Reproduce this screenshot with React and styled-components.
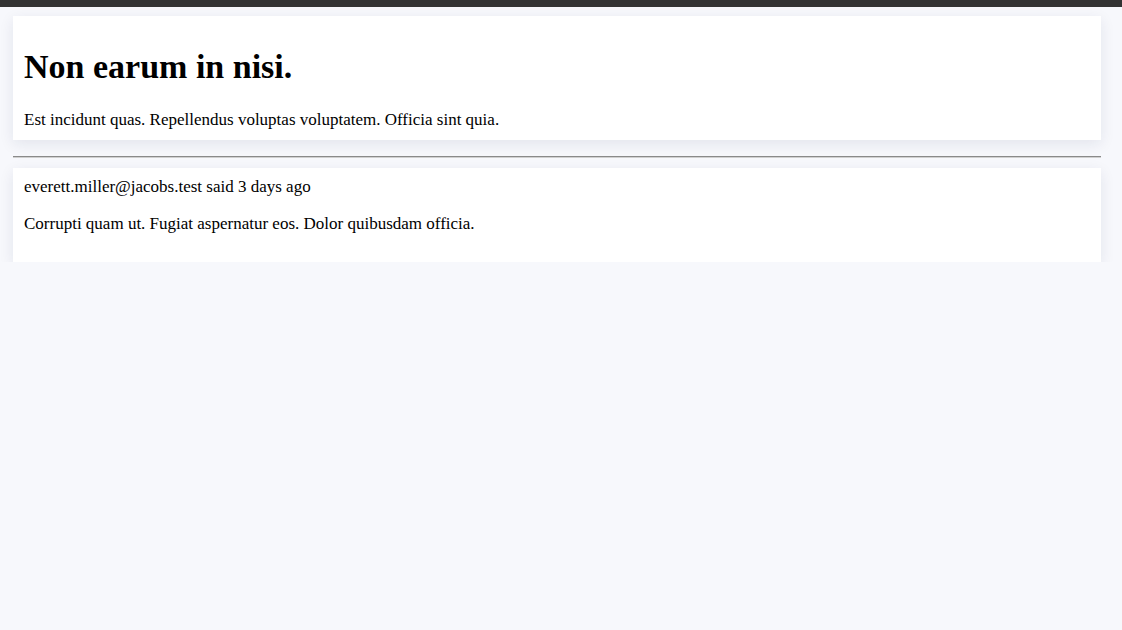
import React from "react";
import styled, { createGlobalStyle } from "styled-components";

const Global = createGlobalStyle`
  html, body { margin: 0; padding: 0; background: #f7f8fc; }
  body { font-family: "Liberation Serif", "Times New Roman", serif; color: #000; font-size: 17px; }
`;

const TopBar = styled.div`
  height: 7px;
  background: #333333;
`;

const Main = styled.main`
  padding: 9px 21px 0 13px;
`;

const Card = styled.section`
  background: #ffffff;
  padding: ${(p) => p.$top || 10}px 10px ${(p) => p.$bottom || 10}px 11px;
  box-shadow: 0 4px 14px rgba(20, 30, 80, 0.09);
`;

const Title = styled.h1`
  font-size: 34px;
  font-weight: bold;
  margin: 21px 0 24px;
  line-height: 1.15;
`;

const Text = styled.p`
  margin: ${(p) => p.$margin || "0"};
  line-height: 1.15;
`;

const Divider = styled.hr`
  margin: 16px 0 10px;
  border: none;
  border-top: 1px solid #8a8a8a;
  border-bottom: 1px solid #d0d0d0;
`;

export default function App() {
  return (
    <>
      <Global />
      <TopBar />
      <Main>
        <Card>
          <Title>Non earum in nisi.</Title>
          <Text>Est incidunt quas. Repellendus voluptas voluptatem. Officia sint quia.</Text>
        </Card>
        <Divider />
        <Card $top={9} $bottom={12}>
          <Text $margin="0 0 18px">everett.miller@jacobs.test said 3 days ago</Text>
          <Text $margin="0 0 16px">Corrupti quam ut. Fugiat aspernatur eos. Dolor quibusdam officia.</Text>
        </Card>
      </Main>
    </>
  );
}
